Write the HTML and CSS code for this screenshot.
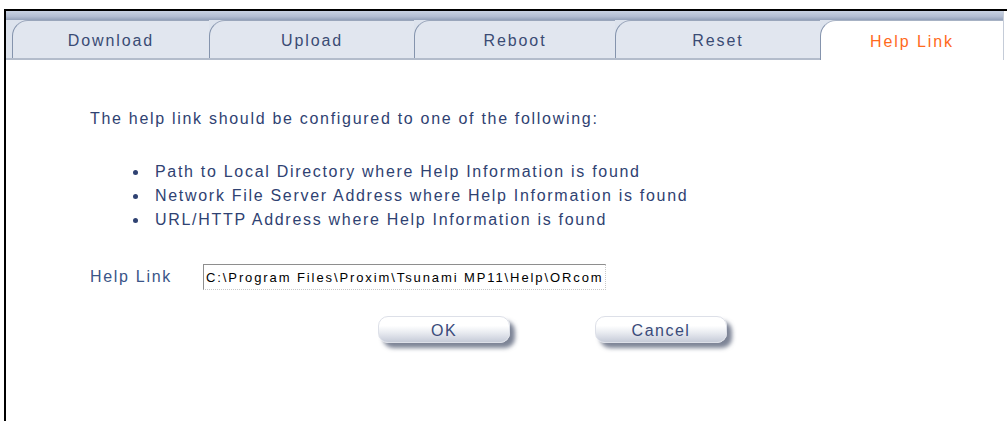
FILE: index.html
```html
<!DOCTYPE html>
<html lang="en">
<head>
<meta charset="utf-8">
<title>Help Link</title>
<link rel="stylesheet" href="styles.css">
</head>
<body>
<div class="frame">
  <div class="tabbar">
    <div class="tabbar-strip"></div>
    <div class="tabs">
      <div class="tab tab-download">Download</div>
      <div class="tab tab-upload">Upload</div>
      <div class="tab tab-reboot">Reboot</div>
      <div class="tab tab-reset">Reset</div>
      <div class="tab tab-active">Help Link</div>
    </div>
  </div>
  <div class="content">
    <p class="intro">The help link should be configured to one of the following:</p>
    <ul class="options">
      <li>Path to Local Directory where Help Information is found</li>
      <li>Network File Server Address where Help Information is found</li>
      <li>URL/HTTP Address where Help Information is found</li>
    </ul>
    <div class="field-row">
      <label class="field-label" for="helplink">Help Link</label>
      <input class="field-input" id="helplink" type="text" value="C:\Program Files\Proxim\Tsunami MP11\Help\ORcommon\index.htm">
    </div>
    <div class="actions">
      <button class="btn" type="button">OK</button>
      <button class="btn" type="button">Cancel</button>
    </div>
  </div>
</div>
</body>
</html>
```

FILE: styles.css
```css
html, body {
  margin: 0;
  padding: 0;
  background: #ffffff;
}

body {
  font-family: "Liberation Sans", Arial, sans-serif;
  font-size: 16px;
  letter-spacing: 1.7px;
  color: #2f4272;
}

.frame {
  margin: 9px 0 0 4px;
  height: 412px;
  border-top: 2px solid #000;
  border-left: 2px solid #000;
  box-sizing: border-box;
}

/* tab strip */
.tabbar {
  width: 997px;
  background: #dde3ed;
  border-right: 1px solid #c5ccd8;
}

.tabbar-strip {
  height: 9px;
  background: linear-gradient(#c9d2e2, #b3bed2 60%, #94a1b9);
}

.tabs {
  display: flex;
  height: 38px;
  padding-left: 6px;
  border-bottom: 2px solid #b3bccb;
}

.tab {
  display: flex;
  align-items: center;
  justify-content: center;
  box-sizing: border-box;
  background: #e1e6ef;
  border-left: 1px solid #8594ad;
  border-top: 1px solid #9aa6bb;
  border-top-left-radius: 16px;
  color: #3a4b74;
  font-size: 16px;
  letter-spacing: 1.9px;
  padding-top: 2px;
}

.tab-download { width: 197px; }
.tab-upload   { width: 205px; }
.tab-reboot   { width: 201px; }
.tab-reset    { width: 205px; }

.tab-active {
  flex: 1;
  background: #ffffff;
  color: #ff6a1c;
  margin-bottom: -2px;
  border-top-color: #a7b2c4;
}

/* page body */
.content {
  padding: 47px 0 0 84px;
  line-height: 24px;
}

.intro {
  margin: 0;
}

.options {
  list-style: none;
  margin: 29px 0 0 43px;
  padding: 0;
}

.options li {
  position: relative;
  padding-left: 22px;
}

.options li::before {
  content: "";
  position: absolute;
  left: 0;
  top: 10px;
  width: 5px;
  height: 5px;
  border-radius: 50%;
  background: #2f4272;
}

.field-row {
  display: flex;
  align-items: center;
  margin-top: 32px;
}

.field-label {
  width: 113px;
  color: #3a5588;
}

.field-input {
  width: 403px;
  height: 26px;
  box-sizing: border-box;
  padding: 0 2px;
  border-top: 1px solid #8e8e8e;
  border-left: 1px solid #8e8e8e;
  border-right: 1px dotted #c8c8c8;
  border-bottom: 1px dotted #c8c8c8;
  font-family: "Liberation Sans", Arial, sans-serif;
  font-size: 13px;
  letter-spacing: 1.9px;
  color: #000;
  background: #fff;
  outline: none;
}

.actions {
  display: flex;
  gap: 85px;
  margin-top: 26px;
  padding-left: 288px;
}

.btn {
  width: 132px;
  height: 27px;
  border: 1px solid #dde0e8;
  border-radius: 10px;
  background: linear-gradient(#ffffff 0%, #ffffff 35%, #e6e9ef 65%, #c6cbd8 100%);
  box-shadow: 5px 5px 4px rgba(70, 80, 105, 0.7);
  font-family: "Liberation Sans", Arial, sans-serif;
  font-size: 16px;
  letter-spacing: 1.5px;
  color: #3a4b7a;
  padding: 2px 0 0;
  cursor: pointer;
}
```
